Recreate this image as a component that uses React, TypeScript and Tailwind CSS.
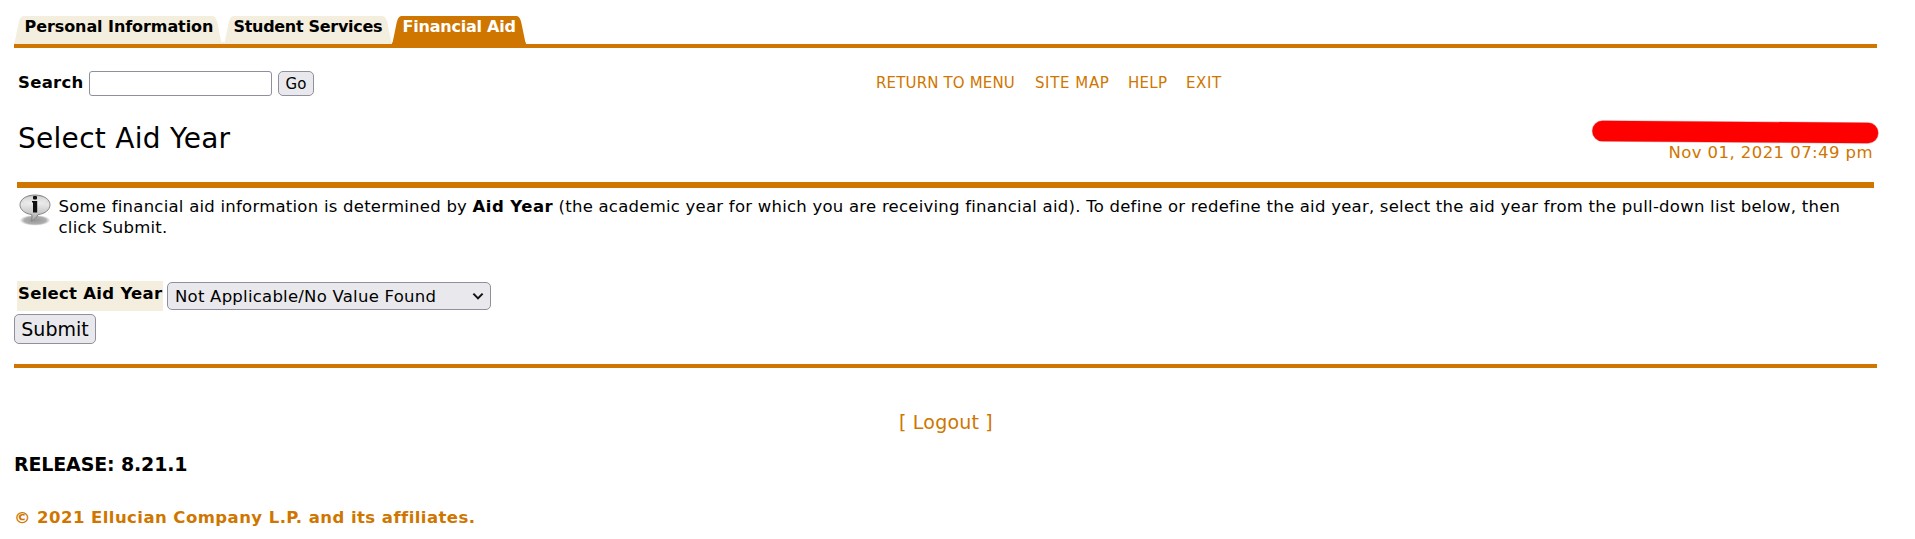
import type { ReactNode } from "react";

function TabCap({ flip = false }: { flip?: boolean }) {
  return (
    <svg
      width="9"
      height="28"
      viewBox="0 0 9 28"
      className={flip ? "shrink-0 -scale-x-100" : "shrink-0"}
      fill="currentColor"
    >
      <path d="M0 28 V26.5 H0.6 L4.6 7 Q6 0.6 9 0 V28 Z" />
    </svg>
  );
}

function Tab({ active = false, className, children }: { active?: boolean; className: string; children: ReactNode }) {
  return (
    <a
      href="#"
      className={`flex h-7 shrink-0 ${active ? "text-[#cf7600]" : "text-[#f3eedd]"}`}
    >
      <TabCap />
      <span className={active ? "flex-1 bg-[#cf7600] text-white" : "flex-1 bg-[#f3eedd] text-black"}>
        <span className={`block font-bold leading-[21px] ${className}`}>{children}</span>
      </span>
      <TabCap flip />
    </a>
  );
}

function InfoIcon() {
  return (
    <svg width="32" height="32" viewBox="0 0 32 32" className="shrink-0">
      <defs>
        <linearGradient id="bubble" x1="0" y1="0" x2="0" y2="1">
          <stop offset="0" stopColor="#bdbdbd" />
          <stop offset="0.35" stopColor="#e8e8e8" />
          <stop offset="0.65" stopColor="#cccccc" />
          <stop offset="1" stopColor="#a0a0a0" />
        </linearGradient>
        <radialGradient id="shadow">
          <stop offset="0" stopColor="#969696" />
          <stop offset="0.75" stopColor="#aeaeae" />
          <stop offset="1" stopColor="#cccccc" stopOpacity="0.3" />
        </radialGradient>
      </defs>
      <ellipse cx="16" cy="26.3" rx="14.8" ry="5.2" fill="url(#shadow)" />
      <path
        d="M16 1 C24.6 1 31 5.2 31 10.8 C31 15.8 26 19.8 19 20.6 C17.6 23.6 15.4 25.8 12.4 27.2 C13 25 13.2 22.8 12.8 20.6 C5.8 19.7 1 15.7 1 10.8 C1 5.2 7.4 1 16 1 Z"
        fill="url(#bubble)"
        stroke="#858585"
        strokeWidth="1"
      />
      <ellipse cx="16" cy="6.5" rx="12" ry="4" fill="#ffffff" opacity="0.3" />
      <rect x="14" y="2" width="4" height="3.4" rx="1" fill="#111" />
      <path d="M13 7 H18.2 V18.4 H14 V8.6 H13 Z" fill="#111" />
    </svg>
  );
}

export default function App() {
  return (
    <div className="h-[539px] w-full overflow-hidden bg-white pl-[14px] pr-[38px] pt-4 font-['DejaVu_Sans',sans-serif] text-base text-black">
      <nav className="flex h-7">
        <Tab className="w-[190px] whitespace-nowrap pl-[1.5px] tracking-[-0.08px]">Personal Information</Tab>
        <div className="w-0.5 self-end border-b-2 border-[#f3eedd]" />
        <Tab className="w-[150px] whitespace-nowrap pl-[0.5px] tracking-[-0.3px]">Student Services</Tab>
        <Tab active className="w-[116px] whitespace-nowrap pl-[1.5px] tracking-[-0.22px]">Financial Aid</Tab>
      </nav>
      <div className="h-1 bg-[#cf7600]" />

      <div className="mt-[23px] flex h-[25px] items-center whitespace-nowrap pl-[4px]">
        <label className="flex w-[71px] text-[16.5px] font-bold tracking-[0.28px]">Search</label>
        <input className="h-[25px] w-[183px] rounded-[3px] border border-[#8f8f9d] bg-white" />
        <button className="ml-1.5 h-[25px] w-9 rounded-[5px] border border-[#8f8f9d] bg-[#e9e9ed] pt-px text-[15px] leading-[22px]">
          Go
        </button>
        <div className="ml-[562px] flex -translate-y-px text-[15px] leading-[24px] text-[#cf7600]">
          <a href="#" className="w-[159px] tracking-[0.15px]">RETURN TO MENU</a>
          <a href="#" className="w-[93px] tracking-[0.6px]">SITE MAP</a>
          <a href="#" className="w-[58px] tracking-[0.3px]">HELP</a>
          <a href="#" className="tracking-[0.6px]">EXIT</a>
        </div>
      </div>

      <div className="relative ml-[3px] mr-[3px] flex h-[86px] items-start justify-between">
        <h1 className="ml-px mt-[26px] text-[28px] leading-[34px] tracking-[0.28px]">Select Aid Year</h1>
        <div className="mr-px mt-[47px] text-[16.5px] leading-5 tracking-[0.43px] text-[#cf7600]">
          Nov 01, 2021 07:49 pm
        </div>
        <svg className="absolute -right-[7px] top-[22px]" width="292" height="28" viewBox="0 0 292 28">
          <path d="M13.5 13 L279 15" stroke="#a33" strokeOpacity="0.35" strokeWidth="21.6" strokeLinecap="round" />
          <path d="M13.5 13 L279 15" stroke="#ff0000" strokeWidth="20.4" strokeLinecap="round" />
        </svg>
      </div>
      <div className="mx-[3px] h-1.5 bg-[#cf7600]" />

      <div className="flex h-[50px] pl-[5px]">
        <div className="mt-[6px] w-[39.5px]">
          <InfoIcon />
        </div>
        <p className="whitespace-nowrap pt-2 text-[16.5px] leading-[21px] tracking-[0.24px]">
          Some financial aid information is determined by <b className="tracking-[0.45px]">Aid Year</b> (the academic
          year for which you are receiving financial aid). To define or redefine the aid year, select the aid year from
          the pull-down list below, then
          <br />
          click Submit.
        </p>
      </div>

      <div className="mt-[43px] flex h-[30px] gap-1 pl-[3px]">
        <label className="w-[146px] whitespace-nowrap bg-[#f3eedd] pl-px text-[16.5px] font-bold leading-[25px] tracking-[0.28px]">
          Select Aid Year
        </label>
        <div className="relative mt-px h-7 w-[324px]">
          <select className="h-7 w-full appearance-none rounded-[5px] border border-[#8f8f9d] bg-[#e9e9ed] pl-[7px] pt-0.5 text-[16.5px] leading-[24px] tracking-[0.24px]">
            <option>Not Applicable/No Value Found</option>
          </select>
          <svg className="pointer-events-none absolute right-[7px] top-[10px]" width="12" height="9" viewBox="0 0 12 9">
            <path d="M1.4 1.6 L6 6.4 L10.6 1.6" fill="none" stroke="#111" strokeWidth="2" />
          </svg>
        </div>
      </div>
      <button className="mt-[3px] block h-[30px] w-[82px] rounded-[5px] border border-[#8f8f9d] bg-[#e9e9ed] text-[19px] leading-[28px]">
        Submit
      </button>

      <div className="mt-5 h-1 bg-[#cf7600]" />
      <div className="mt-[42px] pl-px text-center text-[19px] leading-6 tracking-[0.2px] text-[#cf7600]">
        [ <a href="#">Logout</a> ]
      </div>
      <div className="mt-[18px] text-[19px] font-bold leading-6 tracking-[-0.15px]">RELEASE: 8.21.1</div>
      <div className="mt-[31px] text-[16.5px] font-bold leading-[21px] tracking-[0.44px] text-[#cf7600]">
        © 2021 Ellucian Company L.P. and its affiliates.
      </div>
    </div>
  );
}
